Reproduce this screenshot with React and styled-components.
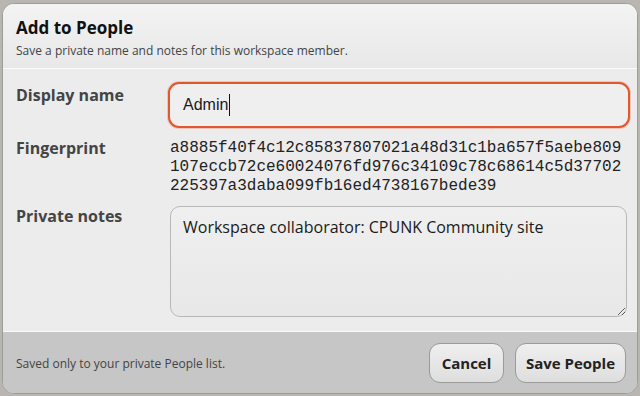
import React from 'react'
import styled, { createGlobalStyle } from "styled-components";

const Global = createGlobalStyle`
    html, body {
        margin: 0;
        padding: 0;
        background: #b9b5b0;
        font-family: 'Open Sans', 'Noto Sans', sans-serif;
    }
`;

const Page = styled.div`
    padding: 3px 2px 2px 2px;
    width: 640px;
    height: 396px;
    box-sizing: border-box;
`;

const Dialog = styled.div`
    width: 636px;
    height: 391px;
    display: flex;
    flex-direction: column;
    border-radius: 12px;
    overflow: hidden;
    border: 1px solid #9c9c9c;
    box-sizing: border-box;
    background: #ececec;
`;

const Header = styled.header`
    height: 65px;
    box-sizing: border-box;
    padding: 14px 13px 0 13px;
    background: linear-gradient(#f3f3f3, #e8e8e8);
    border-bottom: 1px solid #fbfbfb;
`;

const Title = styled.h1`
    margin: 0;
    font-size: 17px;
    line-height: 20px;
    font-weight: 700;
    color: #111;
`;

const Subtitle = styled.p`
    margin: 4px 0 0 0;
    font-size: 12px;
    line-height: 18px;
    color: #444;
`;

const Body = styled.div`
    flex: 1;
    padding: 13px 10px 0 13px;
    display: grid;
    grid-template-columns: 152px 1fr;
    grid-auto-rows: min-content;
    row-gap: 10px;
`;

const Label = styled.div`
    font-size: 16px;
    line-height: 20px;
    font-weight: 700;
    color: #444;
    padding-top: ${props => props.top || 0}px;
`;

const Field = styled.div`
    height: 46px;
    box-sizing: border-box;
    border: 2px solid #e2572b;
    border-radius: 11px;
    background: #efefef;
    box-shadow: 0 0 0 1px rgba(226, 87, 43, 0.25);
    display: flex;
    align-items: center;
    padding-left: 13px;
    font-family: 'Liberation Sans', Arial, sans-serif;
    font-size: 16px;
    color: #1a1a1a;
`;

const Caret = styled.span`
    display: inline-block;
    width: 1px;
    height: 22px;
    background: #111;
    margin-left: 1px;
`;

const Fingerprint = styled.div`
    font-family: 'Liberation Mono', 'Courier New', monospace;
    font-size: 16px;
    line-height: 19px;
    color: #222;
    padding: 1px 0 0 2px;
    word-break: break-all;
    width: 460px;
`;

const Notes = styled.textarea`
    height: 111px;
    box-sizing: border-box;
    margin: 0 0 0 2px;
    width: 457px;
    border: 1px solid #b8b8b8;
    border-radius: 10px;
    background: linear-gradient(#efefef, #e8e8e8);
    padding: 9px 12px;
    font-family: 'Open Sans', 'Noto Sans', sans-serif;
    font-size: 16px;
    line-height: 22px;
    color: #1a1a1a;
    resize: vertical;
    outline: none;
`;

const Footer = styled.footer`
    height: 62px;
    box-sizing: border-box;
    border-top: 1px solid #fafafa;
    background: #c6c6c6;
    display: flex;
    align-items: center;
    padding: 1px 11px 0 13px;
`;

const Hint = styled.span`
    flex: 1;
    font-size: 12px;
    color: #444;
`;

const Btn = styled.button`
    height: 40px;
    width: ${props => props.w}px;
    margin-left: ${props => props.ml || 0}px;
    border: 1px solid #9a9a9a;
    border-radius: 11px;
    background: linear-gradient(#efefef, #dedede);
    font-family: 'Open Sans', 'Noto Sans', sans-serif;
    font-size: 15px;
    font-weight: 700;
    color: #222;
    padding: 0;
`;

const fingerprint = "a8885f40f4c12c85837807021a48d31c1ba657f5aebe809107eccb72ce60024076fd976c34109c78c68614c5d37702225397a3daba099fb16ed4738167bede39";

export default function App() {
    return (
        <Page>
            <Global />
            <Dialog>
                <Header>
                    <Title>Add to People</Title>
                    <Subtitle>Save a private name and notes for this workspace member.</Subtitle>
                </Header>
                <Body>
                    <Label top={3}>Display name</Label>
                    <Field>Admin<Caret /></Field>
                    <Label>Fingerprint</Label>
                    <Fingerprint>{fingerprint}</Fingerprint>
                    <Label>Private notes</Label>
                    <Notes defaultValue="Workspace collaborator: CPUNK Community site" />
                </Body>
                <Footer>
                    <Hint>Saved only to your private People list.</Hint>
                    <Btn w={75}>Cancel</Btn>
                    <Btn w={111} ml={11}>Save People</Btn>
                </Footer>
            </Dialog>
        </Page>
    );
}
